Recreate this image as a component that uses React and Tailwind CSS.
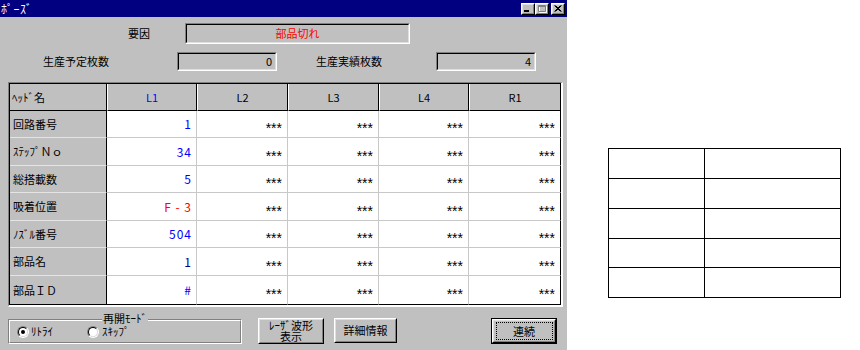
import React from 'react';

const FONT = "font-['Noto_Sans_CJK_JP',sans-serif]";

const COLS = ['L1', 'L2', 'L3', 'L4', 'R1'];

const ROWS = [
  { name: '回路番号', value: '1', color: 'text-[#0000ff]', h: 'h-[27px]' },
  { name: 'ｽﾃｯﾌﾟＮｏ', value: '34', color: 'text-[#0000ff]', h: 'h-[28px]' },
  { name: '総搭載数', value: '5', color: 'text-[#0000ff]', h: 'h-[27px]' },
  { name: '吸着位置', value: 'F - 3', color: 'text-[#ff0000]', h: 'h-[28px]' },
  { name: 'ﾉｽﾞﾙ番号', value: '504', color: 'text-[#0000ff]', h: 'h-[27px]' },
  { name: '部品名', value: '1', color: 'text-[#000080]', h: 'h-[28px]' },
  { name: '部品ＩＤ', value: '#', color: 'text-[#0000ff]', h: 'h-[29px]' },
];

function Sunken({ className, children }) {
  return (
    <div className={`border border-t-[#808080] border-l-[#808080] border-r-white border-b-white ${className}`}>
      <div className="h-full flex items-center border border-t-black border-l-black border-r-[#dfdfdf] border-b-[#dfdfdf] px-[3px]">
        {children}
      </div>
    </div>
  );
}

function Raised({ className, children }) {
  return (
    <div className={`border border-t-white border-l-white border-r-black border-b-black bg-[#c0c0c0] ${className}`}>
      <div className="h-full flex items-center justify-center border border-t-[#dfdfdf] border-l-[#dfdfdf] border-r-[#808080] border-b-[#808080]">
        {children}
      </div>
    </div>
  );
}

function Radio({ checked }) {
  return (
    <span className="w-[12px] h-[12px] rounded-full flex border border-t-[#808080] border-l-[#808080] border-r-white border-b-white">
      <span className="flex-1 rounded-full bg-white flex items-center justify-center border border-t-black border-l-black border-r-[#dfdfdf] border-b-[#dfdfdf]">
        {checked && <span className="w-[4px] h-[4px] rounded-full bg-black" />}
      </span>
    </span>
  );
}

function TitleBar() {
  return (
    <div className="h-[17px] bg-[#000080] flex items-center pl-[1px] pr-[2px] shrink-0">
      <span className="text-white text-[12px] tracking-[0.5px]">ﾎﾟｰｽﾞ</span>
      <div className="ml-auto flex">
        <Raised className="w-[14px] h-[12px]">
          <svg width="10" height="8" viewBox="0 0 10 8">
            <rect x="1" y="5" width="5" height="2" fill="#000" />
          </svg>
        </Raised>
        <Raised className="w-[14px] h-[12px]">
          <svg width="10" height="8" viewBox="0 0 10 8">
            <path d="M2.5 1.5h7v6h-7z" fill="none" stroke="#fff" />
            <path d="M1.5 0.5h7v6h-7z M1.5 1.5h7" fill="none" stroke="#808080" />
          </svg>
        </Raised>
        <Raised className="w-[14px] h-[12px] ml-[2px]">
          <svg width="10" height="8" viewBox="0 0 10 8">
            <path d="M1.5 0.5l6 6M2.5 0.5l6 6M7.5 0.5l-6 6M8.5 0.5l-6 6" stroke="#000" strokeWidth="1" />
          </svg>
        </Raised>
      </div>
    </div>
  );
}

function DataGrid() {
  return (
    <div className="ml-[8px] w-[555px] border-t border-l border-t-[#808080] border-l-[#808080] border-r-2 border-b-2 border-r-white border-b-white">
      <div className="border-t border-l border-t-black border-l-black grid grid-cols-[97px_90px_91px_91px_90px_92px]">
        <div className="h-[27px] bg-[#c0c0c0] border-r border-b border-black flex items-center pl-[2px]">
          ﾍｯﾄﾞ名
        </div>
        {COLS.map((c) => (
          <div
            key={c}
            className={`h-[27px] bg-[#c0c0c0] border-l border-l-white border-r border-b border-r-black border-b-black flex items-center justify-center ${c === 'L1' ? 'text-[#0000ff]' : ''}`}
          >
            {c}
          </div>
        ))}
        {ROWS.map((r, i) => {
          const last = i === ROWS.length - 1;
          return (
            <React.Fragment key={r.name}>
              <div className={`${r.h} bg-[#c0c0c0] border-r border-r-black border-b flex items-center pl-[3px] ${last ? 'border-b-black' : 'border-b-[#e4e4e4]'}`}>
                {r.name}
              </div>
              <div className={`${r.h} bg-white border-r border-r-[#c8c8c8] border-b flex items-center justify-end pr-[4px] tracking-[1px] text-[12px] ${r.color} ${last ? 'border-b-black' : 'border-b-[#c8c8c8]'}`}>
                {r.value}
              </div>
              {COLS.slice(1).map((c, j) => (
                <div
                  key={c}
                  className={`${r.h} bg-white border-r border-b flex items-center justify-end pr-[5px] ${j === 3 ? 'border-r-black' : 'border-r-[#c8c8c8]'} ${last ? 'border-b-black' : 'border-b-[#c8c8c8]'}`}
                >
                  <span className="font-['Liberation_Sans',sans-serif] text-[14px] translate-y-[4px]">***</span>
                </div>
              ))}
            </React.Fragment>
          );
        })}
      </div>
    </div>
  );
}

function BottomBar() {
  return (
    <div className="mt-[5px] flex items-start">
      <div className="relative ml-[8px] mt-[7px] w-[234px] h-[25px] border border-t-[#808080] border-l-[#808080] border-r-white border-b-white">
        <span className="absolute -top-[7px] left-1/2 -translate-x-1/2 bg-[#c0c0c0] px-[1px] leading-[10px]">再開ﾓｰﾄﾞ</span>
        <div className="h-full flex items-center border border-t-white border-l-white border-r-[#808080] border-b-[#808080]">
          <div className="ml-[7px] flex items-center gap-[2px]">
            <Radio checked />
            <span>ﾘﾄﾗｲ</span>
          </div>
          <div className="ml-[34px] flex items-center gap-[3px]">
            <Radio />
            <span>ｽｷｯﾌﾟ</span>
          </div>
        </div>
      </div>
      <Raised className="ml-[16px] mt-[6px] w-[66px] h-[26px]">
        <div className="flex flex-col items-center leading-[11px] -mt-[1px]">
          <span>ﾚｰｻﾞ波形</span>
          <span>表示</span>
        </div>
      </Raised>
      <Raised className="ml-[10px] mt-[6px] w-[63px] h-[25px]">詳細情報</Raised>
      <div className="ml-[94px] mt-[6px] w-[66px] h-[26px] border border-black">
        <Raised className="w-full h-full">
          <span className="w-[57px] h-[18px] border border-dotted border-black flex items-center justify-center">
            連続
          </span>
        </Raised>
      </div>
    </div>
  );
}

export default function App() {
  return (
    <div className={`w-[860px] h-[350px] bg-white flex ${FONT} text-[11px] leading-none text-black`}>
      <div className="w-[567px] h-[350px] bg-[#c0c0c0] flex flex-col">
        <TitleBar />
        <div className="mt-[6px] h-[21px] flex items-center">
          <span className="ml-[128px] w-[22px]">要因</span>
          <Sunken className="ml-[35px] w-[225px] h-[21px]">
            <span className="w-full text-center text-[#ff0000]">部品切れ</span>
          </Sunken>
        </div>
        <div className="mt-[8px] h-[19px] flex items-center">
          <span className="ml-[43px] w-[66px]">生産予定枚数</span>
          <Sunken className="ml-[68px] w-[100px] h-[19px]">
            <span className="w-full text-right">0</span>
          </Sunken>
          <span className="ml-[39px] w-[66px]">生産実績枚数</span>
          <Sunken className="ml-[54px] w-[100px] h-[19px]">
            <span className="w-full text-right">4</span>
          </Sunken>
        </div>
        <div className="mt-[11px]">
          <DataGrid />
        </div>
        <BottomBar />
      </div>
      <div className="pl-[41px] pt-[148px]">
        <div className="w-[233px] border-t border-l border-black grid grid-cols-[96px_136px]">
          {[0, 1, 2, 3, 4].map((i) =>
            [0, 1].map((j) => (
              <div
                key={`${i}-${j}`}
                className={`border-r border-b border-black ${i === 3 ? 'h-[29px]' : 'h-[30px]'}`}
              />
            ))
          )}
        </div>
      </div>
    </div>
  );
}
